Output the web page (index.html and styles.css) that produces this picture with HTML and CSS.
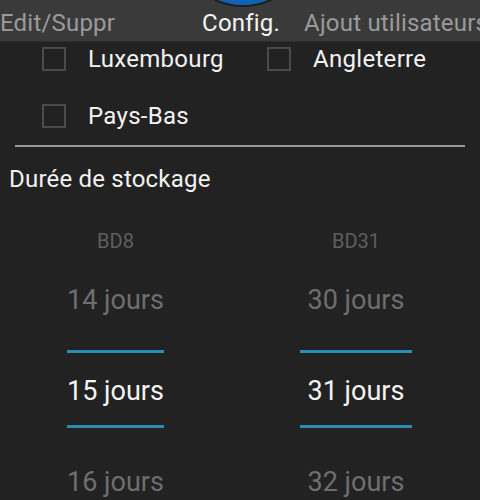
FILE: index.html
```html
<!DOCTYPE html>
<html lang="fr">
<head>
<meta charset="utf-8">
<link rel="stylesheet" href="styles.css">
</head>
<body>
<div class="tabs">
  <div class="tab-icon"></div>
  <span class="tab tab-edit">Edit/Suppr</span>
  <span class="tab tab-active">Config.</span>
  <span class="tab tab-add">Ajout utilisateurs</span>
</div>
<div class="content">
  <div class="checks">
    <label class="check"><span class="box"></span><span class="check-label">Luxembourg</span></label>
    <label class="check"><span class="box"></span><span class="check-label">Angleterre</span></label>
    <label class="check"><span class="box"></span><span class="check-label">Pays-Bas</span></label>
  </div>
  <div class="sep"></div>
  <div class="section-title">Durée de stockage</div>
  <div class="pickers">
    <div class="picker picker-left">
      <div class="picker-head">BD8</div>
      <div class="picker-row dim">14 jours</div>
      <div class="picker-row selected"><span class="sel-inner">15 jours</span></div>
      <div class="picker-row dim">16 jours</div>
    </div>
    <div class="picker picker-right">
      <div class="picker-head">BD31</div>
      <div class="picker-row dim">30 jours</div>
      <div class="picker-row selected"><span class="sel-inner">31 jours</span></div>
      <div class="picker-row dim">32 jours</div>
    </div>
  </div>
</div>
</body>
</html>
```
FILE: styles.css
```css
html, body {
  margin: 0;
  padding: 0;
  background: #222222;
  font-family: Roboto, "Noto Sans", sans-serif;
  overflow: hidden;
  height: 500px;
}

.tabs {
  position: relative;
  height: 42px;
  box-sizing: border-box;
  padding-top: 11px;
  background: #3a3a3a;
  border-bottom: 1px solid #2c2c2c;
  display: flex;
  white-space: nowrap;
  overflow: hidden;
}

.tab-icon {
  position: absolute;
  left: 178px;
  top: -125px;
  width: 130px;
  height: 130px;
  border-radius: 50%;
  background: radial-gradient(circle at 50% 50%, #1a72c8 0%, #0c5fb4 80%, #073f80 100%);
  box-shadow: 0 0 0 2px #1e1e1e;
}

.tab {
  font-size: 24px;
  line-height: 24px;
  letter-spacing: 0.2px;
  color: #9a9a9a;
  flex: none;
}

.tab-edit { margin-left: 0px; }
.tab-active { margin-left: 87px; color: #f4f4f4; }
.tab-add { margin-left: 24px; }

.content {
  padding-top: 5px;
}

.checks {
  display: grid;
  grid-template-columns: 225px auto;
  row-gap: 33px;
  padding-left: 42px;
}

.check {
  display: flex;
  align-items: center;
  height: 24px;
}

.box {
  width: 20px;
  height: 20px;
  border: 2px solid #4a4a4a;
  flex: none;
}

.check-label {
  margin-left: 22px;
  font-size: 24px;
  line-height: 24px;
  letter-spacing: 0.3px;
  color: #f2f2f2;
}

.sep {
  height: 2px;
  margin: 17px 15px 0 15px;
  background: #9a9a9a;
}

.section-title {
  margin-top: 18px;
  padding-left: 9px;
  font-size: 24px;
  line-height: 28px;
  letter-spacing: 0.2px;
  color: #f2f2f2;
}

.pickers {
  display: flex;
  padding-left: 67px;
  gap: 136px;
}

.picker {
  display: flex;
  flex-direction: column;
  align-items: stretch;
}

.picker-left { width: 97px; }
.picker-right { width: 112px; }

.picker-head {
  padding-top: 36px;
  height: 24px;
  font-size: 20px;
  line-height: 24px;
  text-align: center;
  color: #5e5e5e;
}

.picker-row {
  height: 91px;
  box-sizing: border-box;
  display: flex;
  align-items: center;
  justify-content: center;
  font-size: 27px;
  line-height: 27px;
  white-space: nowrap;
}

.dim {
  color: #6e6e6e;
  padding-top: 4px;
}

.selected {
  padding: 6px 0 7px;
  align-items: stretch;
}

.sel-inner {
  flex: 1;
  box-sizing: border-box;
  display: flex;
  align-items: center;
  justify-content: center;
  padding-top: 4px;
  border-top: 3px solid #2d8ab3;
  border-bottom: 3px solid #2d8ab3;
  color: #f4f4f4;
}
```
